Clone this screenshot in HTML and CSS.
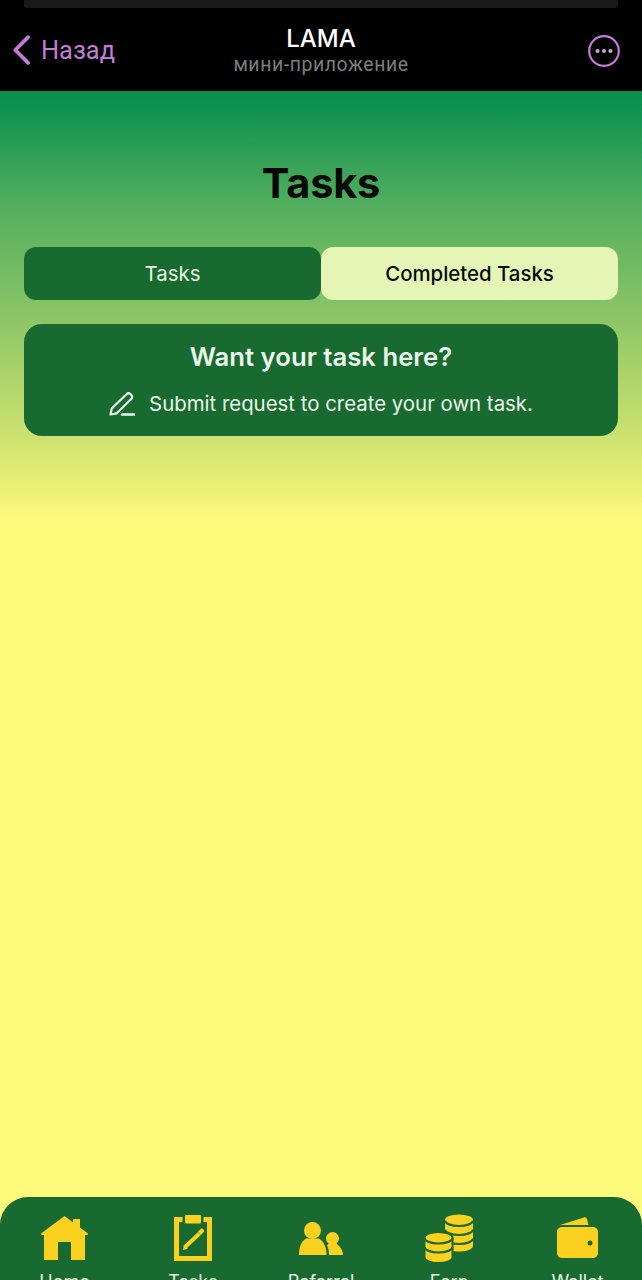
FILE: index.html
```html
<!DOCTYPE html>
<html lang="ru">
<head>
<meta charset="utf-8">
<title>LAMA Tasks</title>
<link rel="stylesheet" href="styles.css">
</head>
<body>
<div class="app">
  <header class="topbar">
    <div class="notch"></div>
    <div class="bar-row">
      <div class="back">
        <svg class="back-icon" viewBox="0 0 20 32" aria-hidden="true"><path d="M17 2.500 3.500 16 17 29.500"/></svg>
        <span>Назад</span>
      </div>
      <div class="bar-title">
        <div class="app-name">LAMA</div>
        <div class="app-sub">мини-приложение</div>
      </div>
      <svg class="more-icon" viewBox="0 0 32 32" aria-hidden="true">
        <circle class="ring" cx="16" cy="16" r="14.800"/>
        <circle class="dot" cx="9.500" cy="16" r="2.100"/><circle class="dot" cx="16" cy="16" r="2.100"/><circle class="dot" cx="22.500" cy="16" r="2.100"/>
      </svg>
    </div>
  </header>

  <main class="content">
    <h1 class="page-title">Tasks</h1>
    <div class="tabs">
      <div class="tab tab-dark">Tasks</div>
      <div class="tab tab-light">Completed Tasks</div>
    </div>
    <section class="promo">
      <h2 class="promo-title">Want your task here?</h2>
      <p class="promo-line">
        <svg class="pen-icon" viewBox="0 0 26 24" aria-hidden="true">
          <path d="M1.500 22.500 2.700 16.500 17.500 2.300c1.200-1.200 3-1.200 4.200 0l.5.500c1.100 1.200 1.100 3 0 4.200L7.800 21.300z"/>
          <path class="pen-line" d="M13 22.500h12"/>
        </svg>
        <span>Submit request to create your own task.</span>
      </p>
    </section>
  </main>

  <nav class="tabbar">
    <div class="nav-item">
      <svg class="nav-icon" viewBox="0 0 48 45" aria-hidden="true">
        <path d="M32 3h7v11l-7-5z"/>
        <path d="M23.500 0 47 17.500 46.500 19H44v25H30V26H17v18H3V19H.5L0 17.500z"/>
      </svg>
      <span>Home</span>
    </div>
    <div class="nav-item">
      <svg class="nav-icon" viewBox="0 0 38 46" aria-hidden="true">
        <rect x="11" y="0" width="16" height="8.500" rx="1"/>
        <path class="line" d="M8.500 4.500H2.500v39h33v-39h-6"/>
        <path class="line pencil" d="M11 32 25.500 18.500"/>
        <path d="M9 35l.8-5 4 3.800zM24 16.500l2.700-2.500c.7-.6 1.600-.6 2.200 0l.8.800c.6.700.6 1.600 0 2.200L27 20z"/>
      </svg>
      <span>Tasks</span>
    </div>
    <div class="nav-item">
      <svg class="nav-icon" viewBox="0 0 44 34" aria-hidden="true">
        <circle cx="13.500" cy="8.500" r="8.500"/>
        <path d="M0 33c0-7 1.500-13 7-16.500h13c5.500 3.500 7.500 9.500 7.500 16.500z"/>
        <circle cx="33.500" cy="16.500" r="6.500"/>
        <path d="M30 33c0-4-.5-7-2-9.500l2-2.500h7l2 2c3 2.500 5 6 5 10z"/>
      </svg>
      <span>Referral</span>
    </div>
    <div class="nav-item">
      <svg class="nav-icon" viewBox="0 0 50 50" aria-hidden="true">
        <path d="M21 6a14 5.500 0 0 1 28 0v26a14 5.500 0 0 1-28 0z"/>
        <path class="band" d="M21 6.500a14 5.500 0 0 0 28 0M21 15.500a14 5.500 0 0 0 28 0M21 24.500a14 5.500 0 0 0 28 0"/>
        <path class="coin-edge" d="M.5 23.500a14 5.500 0 0 1 28 0v20a14 5.500 0 0 1-28 0z"/>
        <path class="band" d="M.5 24a14 5.500 0 0 0 28 0M.5 33a14 5.500 0 0 0 28 0"/>
      </svg>
      <span>Earn</span>
    </div>
    <div class="nav-item">
      <svg class="nav-icon" viewBox="0 0 41 41" aria-hidden="true">
        <path d="M3 8 27 .5c1.600-.5 2.700.3 3 1.700L31.500 8z"/>
        <path fill-rule="evenodd" d="M5 10h31c2.800 0 5 2.200 5 5v21c0 2.800-2.200 5-5 5H5c-2.800 0-5-2.200-5-5V15c0-2.800 2.200-5 5-5zm28 13.500a2.500 2.500 0 1 0 0 5 2.500 2.500 0 0 0 0-5z"/>
      </svg>
      <span>Wallet</span>
    </div>
  </nav>
</div>
</body>
</html>
```
FILE: styles.css
```css
* { box-sizing: border-box; }
html, body { margin: 0; padding: 0; height: 100%; }
body { background: #000; overflow: hidden; font-family: Inter, "Noto Sans", sans-serif; }

.app {
  width: 642px;
  height: 1280px;
  display: flex;
  flex-direction: column;
  overflow: hidden;
  background: #fefa7c;
}

/* Telegram header */
.topbar { flex: 0 0 91px; background: #000; padding: 0 12px; display: flex; flex-direction: column; }
.notch { height: 8px; margin: 0 12px; background: #191919; border-radius: 0 0 3px 3px; flex: none; }
.bar-row { flex: 1; display: grid; grid-template-columns: 1fr auto 1fr; align-items: center; }
.back { display: flex; align-items: center; gap: 10px; color: #c27cd6; font-size: 25.400px; font-family: Roboto, sans-serif; padding-top: 1px; }
.back-icon { width: 19px; height: 32px; fill: none; stroke: #c27cd6; stroke-width: 4; stroke-linecap: round; stroke-linejoin: round; }
.bar-title { text-align: center; margin-top: 2px; }
.app-name { color: #fff; font-size: 24px; font-weight: 500; line-height: 28px; }
.app-sub { color: #7d7d7d; font-size: 19.400px; line-height: 24px; font-family: Roboto, sans-serif; letter-spacing: .6px; }
.more-icon { width: 32px; height: 32px; justify-self: end; margin-right: 10px; margin-top: 2px; }
.ring { fill: none; stroke: #c27cd6; stroke-width: 2.200; }
.dot { fill: #c9a0d8; }

/* Main */
.content {
  flex: 1;
  padding: 0 24px;
  background: linear-gradient(180deg, #098f4d 0, #0d914e 14px, #50ad5e 110px, #8bc566 225px, #cfe36f 350px, #fefa7c 430px);
  background-repeat: no-repeat;
}
.page-title { margin: 0; padding-top: 63px; height: 156px; text-align: center; font-size: 41.500px; line-height: 58px; font-weight: 700; color: #050805; letter-spacing: -.2px; }
.tabs { display: grid; grid-template-columns: 297px 297px; height: 53px; }
.tab { display: flex; align-items: center; justify-content: center; border-radius: 12px; font-size: 20.400px; }
.tab-dark { background: #186a31; color: #e8f8e0; }
.tab-light { background: #e5f5b5; color: #060a06; font-weight: 450; }

.promo { margin-top: 24px; height: 112px; background: #186a31; border-radius: 18px; padding-top: 16px; color: #ebf9ea; text-align: center; }
.promo-title { margin: 0; font-size: 25.700px; line-height: 34px; font-weight: 600; }
.promo-line { margin: 16px 0 0; display: flex; justify-content: center; align-items: center; gap: 14px; font-size: 20.400px; line-height: 28px; }
.pen-icon { width: 26px; height: 24px; fill: none; stroke: #ebf9ea; stroke-width: 2.200; stroke-linecap: round; stroke-linejoin: round; }
.pen-line { stroke-width: 2.600; }

/* Bottom nav */
.tabbar {
  flex: 0 0 83px;
  background: #186a31;
  border-radius: 28px 28px 0 0;
  display: grid;
  grid-template-columns: 129px 128px 128px 128px 129px;
  align-items: start;
  overflow: hidden;
}
.nav-item { height: 100px; position: relative; display: flex; flex-direction: column; align-items: center; color: #e8f3e0; font-size: 18px; line-height: 22px; }
.nav-item span { position: absolute; top: 74px; }
.nav-icon { display: block; fill: #fbd11f; }
.line { fill: none; stroke: #fbd11f; stroke-width: 5; }
.pencil { stroke-width: 4; }
.band { fill: none; stroke: #186a31; stroke-width: 2.200; }
.coin-edge { stroke: #186a31; stroke-width: 2; }
.nav-item:nth-child(1) .nav-icon { width: 48px; height: 45px; margin-top: 19px; }
.nav-item:nth-child(2) .nav-icon { width: 38px; height: 46px; margin-top: 18px; }
.nav-item:nth-child(3) .nav-icon { width: 44px; height: 34px; margin-top: 25px; }
.nav-item:nth-child(4) .nav-icon { width: 50px; height: 50px; margin-top: 17px; }
.nav-item:nth-child(5) .nav-icon { width: 41px; height: 41px; margin-top: 20px; }
```
